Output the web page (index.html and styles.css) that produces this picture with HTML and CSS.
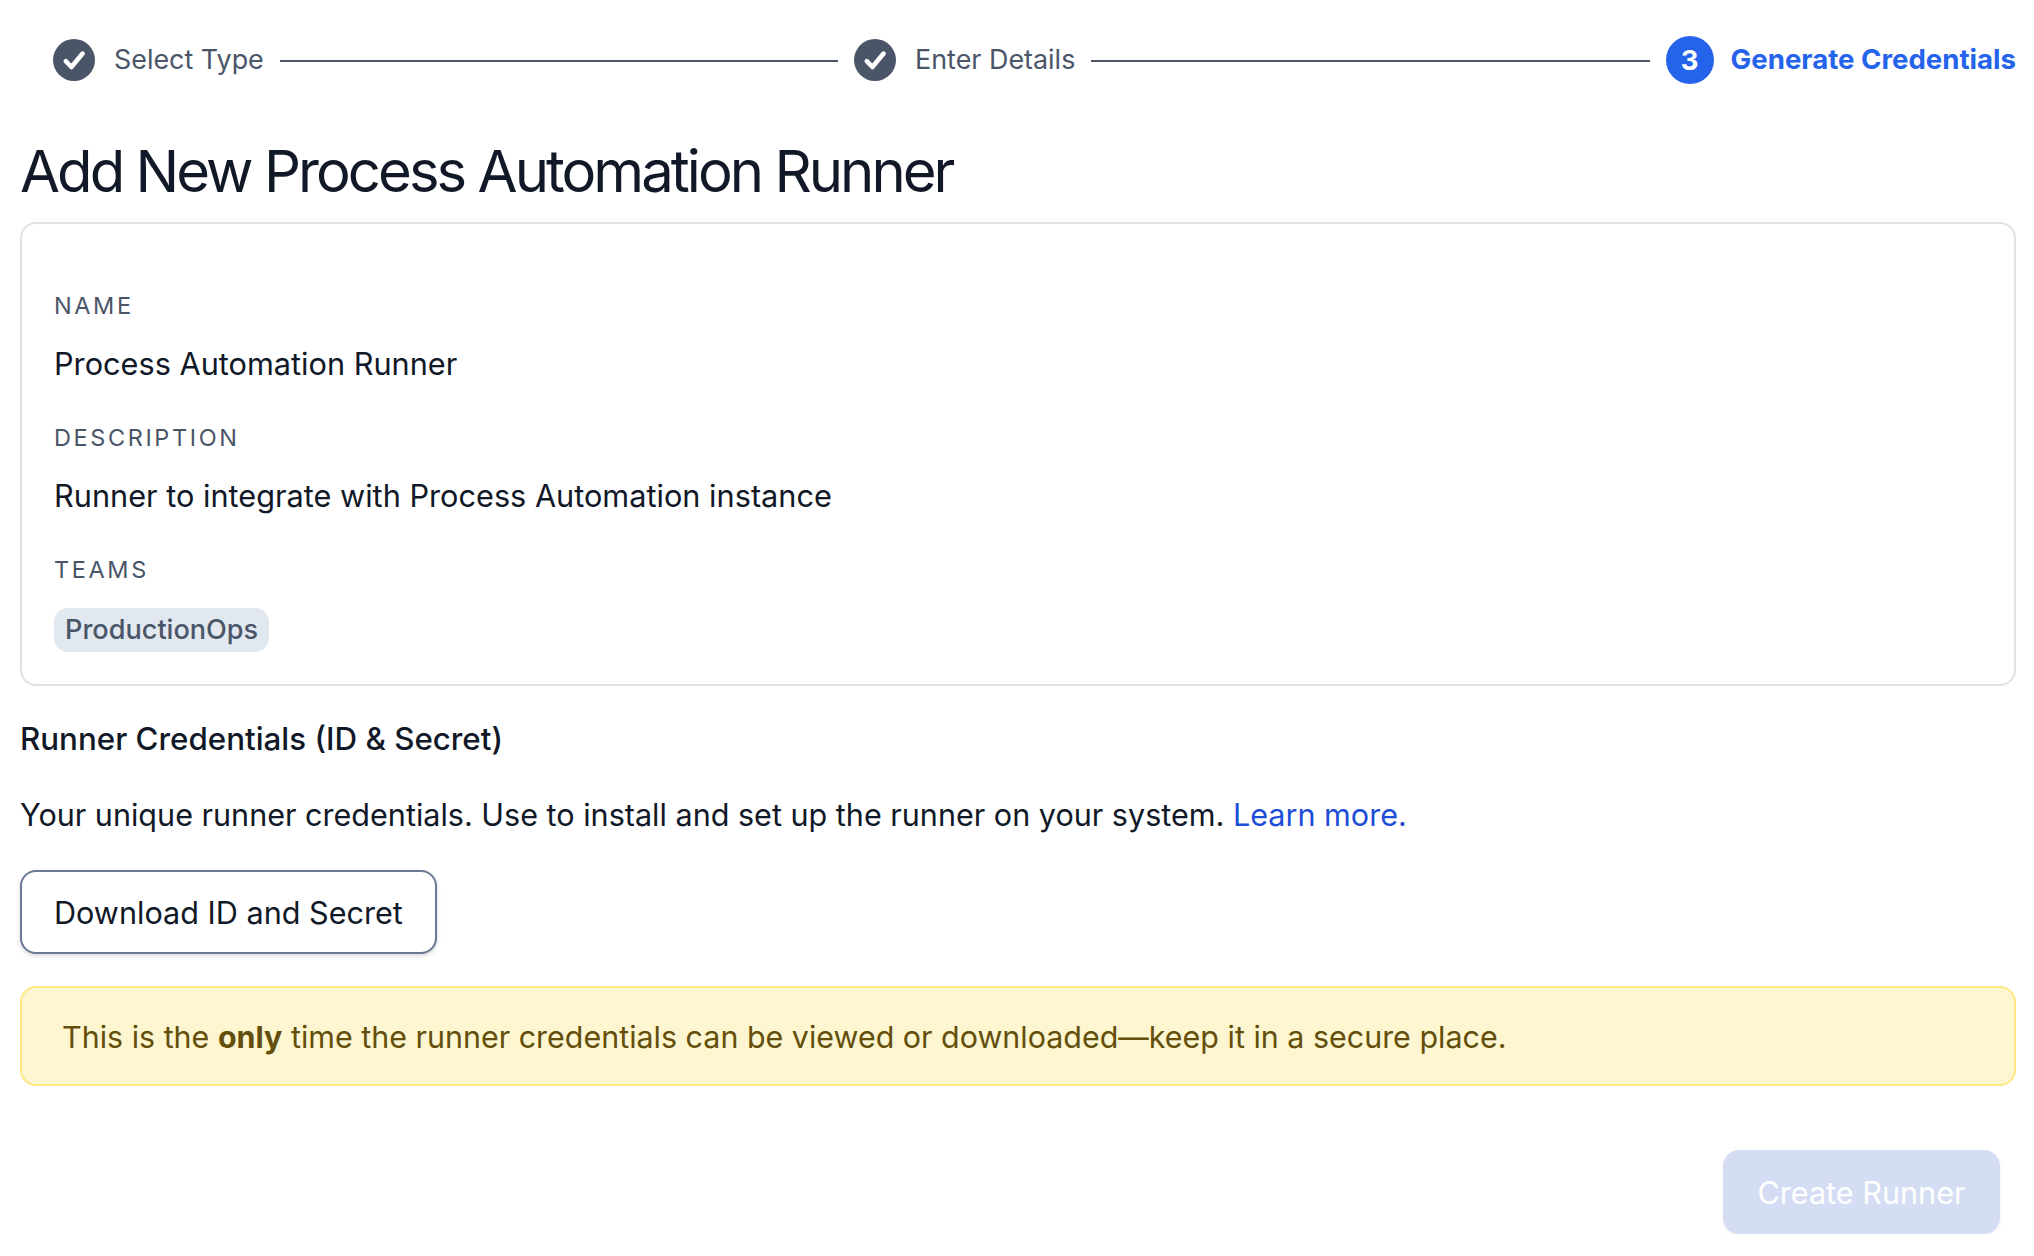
FILE: index.html
```html
<!DOCTYPE html>
<html lang="en">
<head>
    <meta charset="UTF-8">
    <title>Add New Process Automation Runner</title>
    <link rel="stylesheet" href="styles.css">
</head>
<body>
    <div class="page">
        <!-- Stepper -->
        <ol class="stepper">
            <li class="step">
                <svg class="step-check" viewBox="0 0 42 42"><circle cx="21" cy="21" r="21" fill="#4a5568"/><path d="M12.8 22.2l5.6 5.8L29.6 14.6" fill="none" stroke="#fff" stroke-width="4.6" stroke-linecap="round" stroke-linejoin="round"/></svg>
                <span>Select Type</span>
            </li>
            <li class="step-line"></li>
            <li class="step">
                <svg class="step-check" viewBox="0 0 42 42"><circle cx="21" cy="21" r="21" fill="#4a5568"/><path d="M12.8 22.2l5.6 5.8L29.6 14.6" fill="none" stroke="#fff" stroke-width="4.6" stroke-linecap="round" stroke-linejoin="round"/></svg>
                <span>Enter Details</span>
            </li>
            <li class="step-line"></li>
            <li class="step step-active">
                <span class="step-num">3</span>
                <span>Generate Credentials</span>
            </li>
        </ol>

        <h1 class="title">Add New Process Automation Runner</h1>

        <!-- Summary -->
        <div class="card">
            <div class="label">NAME</div>
            <div class="value">Process Automation Runner</div>
            <div class="label">DESCRIPTION</div>
            <div class="value">Runner to integrate with Process Automation instance</div>
            <div class="label">TEAMS</div>
            <span class="chip">ProductionOps</span>
        </div>

        <h2 class="subtitle">Runner Credentials (ID &amp; Secret)</h2>
        <p class="help">Your unique runner credentials. Use to install and set up the runner on your system. <a href="#">Learn more.</a></p>

        <button class="btn btn-outline" type="button">Download ID and Secret</button>

        <div class="warning">This is the <strong>only</strong> time the runner credentials can be viewed or downloaded—keep it in a secure place.</div>

        <div class="footer">
            <button class="btn btn-primary" type="button" disabled>Create Runner</button>
        </div>
    </div>
</body>
</html>
```

FILE: styles.css
```css
body {
    margin: 0;
    background: #fff;
    color: #111827;
    font-family: Inter, "Noto Sans", sans-serif;
    font-size: 30.7px;
}
.page {
    padding: 0 18px 0 20px;
}
.stepper {
    display: flex;
    align-items: center;
    list-style: none;
    margin: 0;
    padding: 36px 0 0 33px;
    height: 48px;
}
.step {
    display: flex;
    align-items: center;
    gap: 19px;
    color: #4a5568;
    font-size: 26.9px;
    height: 48px;
}
.step span {
    margin-top: -2px;
}
.step-check {
    width: 42px;
    height: 42px;
}
.step-line {
    flex: 1;
    height: 2px;
    background: #4a5568;
    margin: 2px 16px 0;
}
.step-active {
    gap: 17px;
    color: #2563eb;
    font-size: 27.6px;
    font-weight: 700;
}
.step .step-num {
    margin-top: 0;
    width: 48px;
    height: 48px;
    border-radius: 50%;
    background: #2563eb;
    color: #fff;
    display: flex;
    align-items: center;
    justify-content: center;
}
.title {
    margin: 0;
    padding: 51px 0 15px;
    font-size: 58px;
    line-height: 72px;
    font-weight: 400;
    letter-spacing: -2.95px;
}
.card {
    border: 2px solid #e2e2e2;
    border-radius: 16px;
    padding: 68px 32px 32px;
}
.label {
    color: #4a5568;
    font-size: 23.5px;
    line-height: 28px;
    letter-spacing: 2.6px;
}
.value {
    line-height: 40px;
    margin: 24px 0 40px;
}
.chip {
    display: block;
    width: fit-content;
    margin-top: 24px;
    padding: 0 11px;
    height: 44px;
    line-height: 44px;
    border-radius: 14px;
    background: #e2e8f0;
    color: #4a5568;
    font-size: 27.1px;
    font-weight: 500;
}
.subtitle {
    margin: 31px 0 0;
    font-size: 31.3px;
    line-height: 44px;
    font-weight: 500;
}
.help {
    margin: 32px 0 0;
    font-size: 30.55px;
    line-height: 44px;
}
.help a {
    color: #1d4ed8;
    text-decoration: none;
}
.btn {
    font-family: inherit;
    font-size: 30.6px;
    border-radius: 16px;
    height: 84px;
}
.btn-outline {
    display: block;
    margin-top: 33px;
    padding: 0 32px;
    background: #fff;
    color: #111827;
    border: 2px solid #6b7a94;
    box-shadow: 0 2px 4px rgba(0, 0, 0, 0.15);
}
.warning {
    margin-top: 32px;
    padding: 28px 40px 26px;
    background: #fef6d0;
    border: 2px solid #fde881;
    border-radius: 16px;
    color: #634f0b;
    font-size: 30.45px;
    line-height: 42px;
}
.footer {
    display: flex;
    justify-content: flex-end;
    padding: 64px 16px 0 0;
}
.btn-primary {
    width: 277px;
    border: none;
    background: #d5ddf4;
    color: #fff;
    box-shadow: 0 2px 4px rgba(0, 0, 0, 0.05);
}
```
